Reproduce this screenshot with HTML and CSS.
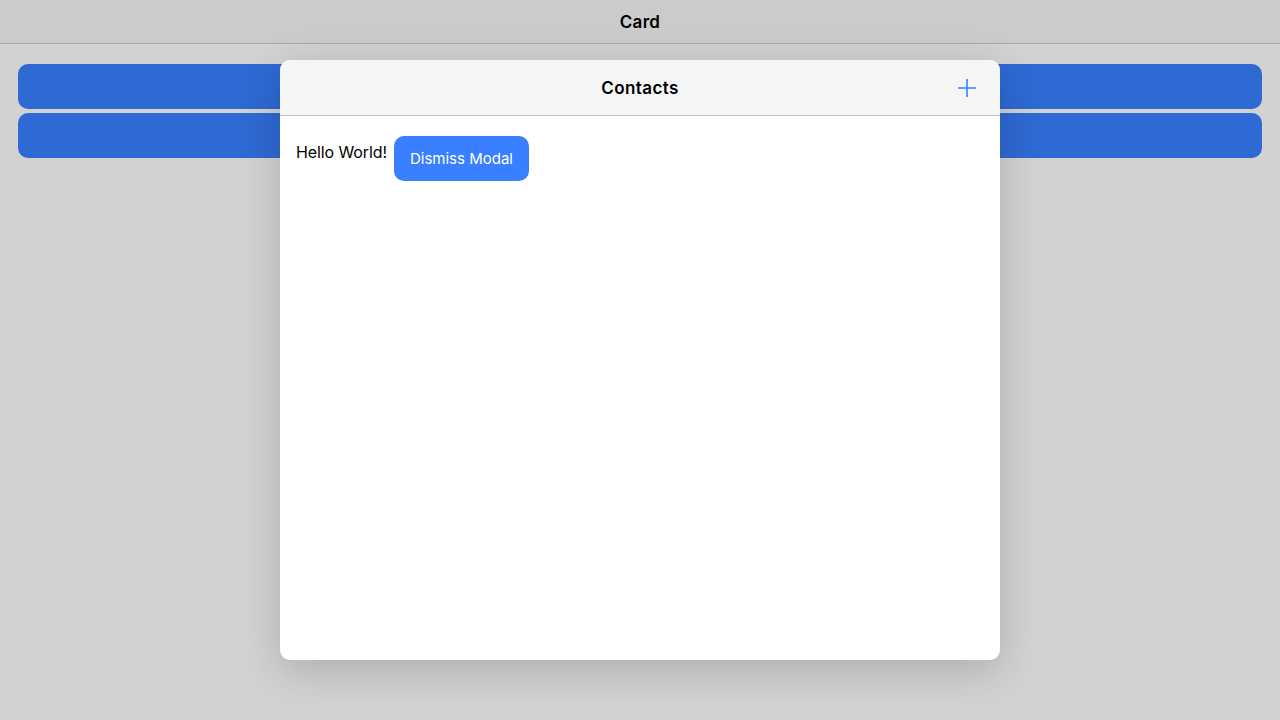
FILE: index.html
```html
<!DOCTYPE html>
<html>
<head>
<meta charset="utf-8">
<link rel="stylesheet" href="styles.css">
</head>
<body>
<div class="app">
  <header class="toolbar"><span class="title">Card</span></header>
  <main class="content">
    <div class="bar-btn"></div>
    <div class="bar-btn"></div>
  </main>
</div>
<div class="modal">
  <div class="modal-header">
    <span class="modal-title">Contacts</span>
    <svg class="plus" width="20" height="20" viewBox="0 0 20 20"><path d="M10 1v18M1 10h18" stroke="#3880ff" stroke-width="1.6" fill="none"/></svg>
  </div>
  <div class="modal-body">
    <span class="hello">Hello World!</span>
    <button class="dismiss">Dismiss Modal</button>
  </div>
</div>
</body>
</html>
```
FILE: styles.css
```css
html, body { margin: 0; padding: 0; }
body {
  width: 1280px; height: 720px; overflow: hidden;
  font-family: Inter, "Noto Sans", sans-serif;
  background: #d2d2d2;
  position: relative;
}
.app { display: flex; flex-direction: column; height: 720px; }
.toolbar {
  height: 43px; border-bottom: 1px solid #a8a8a8;
  background: #cbcbcb;
  display: flex; align-items: center; justify-content: center;
}
.title { font-size: 17px; font-weight: 600; color: #000; letter-spacing: 0.3px; }
.content { padding: 20px 18px; display: flex; flex-direction: column; gap: 4px; }
.bar-btn { height: 45px; background: #2e6ad3; border-radius: 10px; }
.modal {
  position: absolute; left: 280px; top: 60px; width: 720px; height: 600px;
  background: #fff; border-radius: 10px; overflow: hidden;
  box-shadow: 0 10px 40px rgba(0,0,0,0.18);
  display: flex; flex-direction: column;
}
.modal-header {
  height: 55px; background: #f5f5f5; border-bottom: 1px solid #c2c2c2;
  display: flex; align-items: center; justify-content: center; position: relative;
}
.modal-title { font-size: 17px; font-weight: 600; color: #000; letter-spacing: 0.4px; }
.plus { position: absolute; right: 23px; top: 18px; }
.modal-body { padding: 20px 16px; display: flex; align-items: flex-start; gap: 7px; }
.hello { font-size: 16px; color: #000; line-height: 20px; margin-top: 6px; letter-spacing: -0.1px; }
.dismiss {
  height: 45px; padding: 0 16px; border: none; border-radius: 10px;
  background: #3880ff; color: #fff; font-family: inherit; font-size: 15px;
}
```
